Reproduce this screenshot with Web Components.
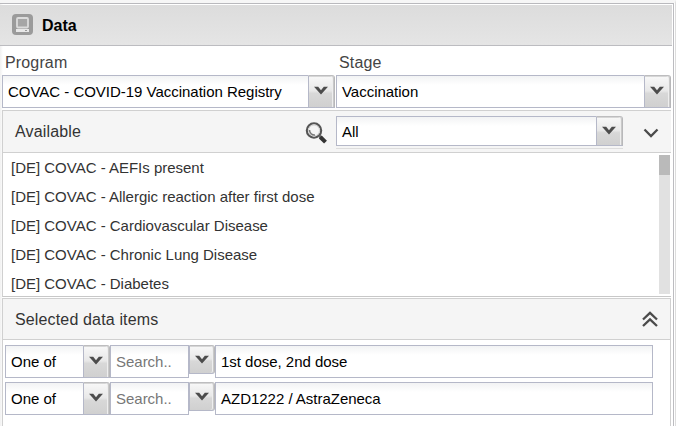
<!DOCTYPE html>
<html lang="en"><head><meta charset="utf-8"><title>Data</title>
<style>
html,body{margin:0;height:100%;overflow:hidden;background:#fff}
body{font-family:"Liberation Sans",Arial,sans-serif}
</style></head><body>
<data-window></data-window>
<script>
const define=(name,html,init)=>{
  const t=document.createElement('template');t.innerHTML=html;
  customElements.define(name,class extends HTMLElement{
    constructor(){super();this.attachShadow({mode:'open'}).append(t.content.cloneNode(true))}
    connectedCallback(){if(init)init(this,this.shadowRoot)}
  });
};
define('drop-trigger',`<style>
:host{display:block;box-sizing:border-box;width:27px;border:1px solid #b5b8c8;border-top:1px solid #bdbdbf;border-right:1px solid #b8b8ba;border-top-right-radius:3px;background:linear-gradient(#f8f8f8,#e8e8e8 48%,#d8d8d8 56%,#d0d0d0);box-shadow:inset -1px 0 #c9c9c9,inset -2px 0 #eee,inset 0 1px #d6d6d6}
svg{display:block;margin:var(--arrow-top,10px) 0 0 5px}
</style><svg width="14" height="10" viewBox="0 0 14 10"><path d="M0 .8H4.2L7 4.3L9.8 .8H14L7 8.6Z" fill="#4c4c4c"/></svg>`);
define('text-field',`<style>
:host{display:flex;align-items:center;box-sizing:border-box;height:33px;border:1px solid #b5b8c8;padding:0 0 0 5px;background:linear-gradient(#f2f3f4,#fff 9px);font-size:15px;line-height:17px;color:#000;white-space:nowrap;letter-spacing:-.02px}
:host([hint]){color:#777}
</style><span><slot></slot></span>`);
define('combo-box',`<style>
:host{display:flex;height:33px}
text-field{flex:1;border-right:0;height:100%}
</style><text-field><slot></slot></text-field><drop-trigger></drop-trigger>`);
define('title-bar',`<style>
:host{display:flex;align-items:center;box-sizing:border-box;height:41px;border-bottom:1px solid #bcbcc0;background:linear-gradient(#dcdcdc,#e5e5e5);padding-left:12px;font-weight:700;font-size:16px;color:#000;margin-right:1px}
svg{margin-right:9px;margin-top:-1px}
span{padding-top:2px}
</style><svg width="21" height="21" viewBox="0 0 21 21"><rect width="21" height="21" rx="4" fill="#9b9b9b"/><rect x="5" y="4" width="11" height="9.5" rx="1" fill="#a6a6a6" stroke="#dcdcdc" stroke-width="1.8"/><path d="M4 15H17V18H4Z" fill="#e8e8e8"/><path d="M13 16.5h2" stroke="#999"/></svg><span><slot></slot></span>`);
define('field-label',`<style>:host{display:block;font-size:16px;line-height:18px;color:#444;padding:8px 0 3px 3px;letter-spacing:.15px}</style><slot></slot>`);
define('section-bar',`<style>
:host{display:flex;box-sizing:border-box;background:#f5f5f5;border-top:1px solid #d0d0d0;border-bottom:1px solid #d0d0d0;font-size:16px;line-height:18px;color:#333;letter-spacing:.15px}
</style><slot></slot>`);
define('magnifier-icon',`<style>:host{display:block}svg{display:block}</style><svg width="22" height="22" viewBox="0 0 22 22" fill="none"><circle cx="9" cy="8.5" r="7.2" stroke="#555" stroke-width="2.1"/><circle cx="9" cy="8.5" r="5.5" stroke="#d0d0d0"/><path d="M4.5 8A5 5 0 0 0 10 13" stroke="#777" stroke-width="1.5"/><path d="M14 13.5L16.5 16" stroke="#666" stroke-width="3"/><path d="M15.3 15L20.5 20.2" stroke="#333" stroke-width="4"/></svg>`);
define('item-list',`<style>
:host{display:flex;box-sizing:border-box;height:144px;border-left:1px solid #d0d0d0;border-bottom:1px solid #c8c8c8;justify-content:space-between}
ul{list-style:none;margin:0;padding:0 0 0 8px;font-size:15px;line-height:29px;color:#333;letter-spacing:-.01px}
i{display:block;width:11px;height:139px;margin-top:2px;margin-right:1px;background:linear-gradient(#bababa 20px,#e1e1e1 20px)}
</style><ul></ul><i></i>`,(el,root)=>{
  for(const s of el.getAttribute('items').split('|')){const li=document.createElement('li');li.textContent=s;root.querySelector('ul').append(li)}
});
define('filter-row',`<style>
:host{display:grid;grid-template-columns:105px 79px 26px 438px;height:33px;margin-bottom:4px}
drop-trigger.s{width:26px;height:29px;--arrow-top:9px;border-radius:0 3px 3px 0}
</style><combo-box>One of</combo-box><text-field hint>Search..</text-field><drop-trigger class="s"></drop-trigger><text-field><slot></slot></text-field>`);
define('data-window',`<style>
:host{display:block;box-sizing:border-box;width:676px;height:426px;border-top:3px solid #f6f6f6;border-right:1px solid #ddd;padding-right:1px;background:#fff}
.frame{box-sizing:border-box;height:423px;border-top:1px solid #b9b9bd;border-right:1px solid #bcbcc0;padding-top:1px;background:linear-gradient(90deg,#f0f0f0,#fff 3px)}
.fields{display:grid;grid-template-columns:333px 335px;gap:0 1px;padding-left:2px;height:64px}
.stack{margin:0 2px 0 2px}
.available{height:43px;align-items:flex-start;border-left:1px solid #d0d0d0}
.available b,.selected b{font-weight:400}
.available b{width:290px;margin:12px 0 0 12px}
magnifier-icon{margin-top:11px;margin-right:9px}
.filter{width:287px;padding-top:5px;display:flex;flex-direction:column;border-bottom:1px solid #ddd;box-sizing:border-box;height:38px}
.filter combo-box{height:30px;--arrow-top:9px}
.down{margin:16px 0 0 20px}
.selected{height:42px;margin-top:1px;align-items:center;justify-content:space-between;border-left:1px solid #d0d0d0;border-right:1px solid #d0d0d0;padding:0 12px 0 12px}
.selected b{padding-top:2px}
.rows{height:83px;border-left:1px solid #d0d0d0;border-right:1px solid #d0d0d0;padding:5px 0 0 2px;background:#fff}
</style>
<div class="frame">
<title-bar>Data</title-bar>
<div class="fields"><div><field-label>Program</field-label><combo-box>COVAC - COVID-19 Vaccination Registry</combo-box></div><div><field-label>Stage</field-label><combo-box>Vaccination</combo-box></div></div>
<div class="stack">
<section-bar class="available"><b>Available</b><magnifier-icon></magnifier-icon><div class="filter"><combo-box>All</combo-box></div><svg class="down" width="16" height="12" viewBox="0 0 16 12"><path d="M1.5 2.5L8 9L14.5 2.5" fill="none" stroke="#4b4b4b" stroke-width="2.3"/></svg></section-bar>
<item-list items="[DE] COVAC - AEFIs present|[DE] COVAC - Allergic reaction after first dose|[DE] COVAC - Cardiovascular Disease|[DE] COVAC - Chronic Lung Disease|[DE] COVAC - Diabetes"></item-list>
<section-bar class="selected"><b>Selected data items</b><svg width="16" height="16" viewBox="0 0 16 16"><path d="M1 8.5L8 1.8L15 8.5M1 15L8 8.3L15 15" fill="none" stroke="#4b4b4b" stroke-width="2.3"/></svg></section-bar>
<div class="rows"><filter-row>1st dose, 2nd dose</filter-row><filter-row>AZD1222 / AstraZeneca</filter-row></div>
</div></div>`);
</script></body></html>
